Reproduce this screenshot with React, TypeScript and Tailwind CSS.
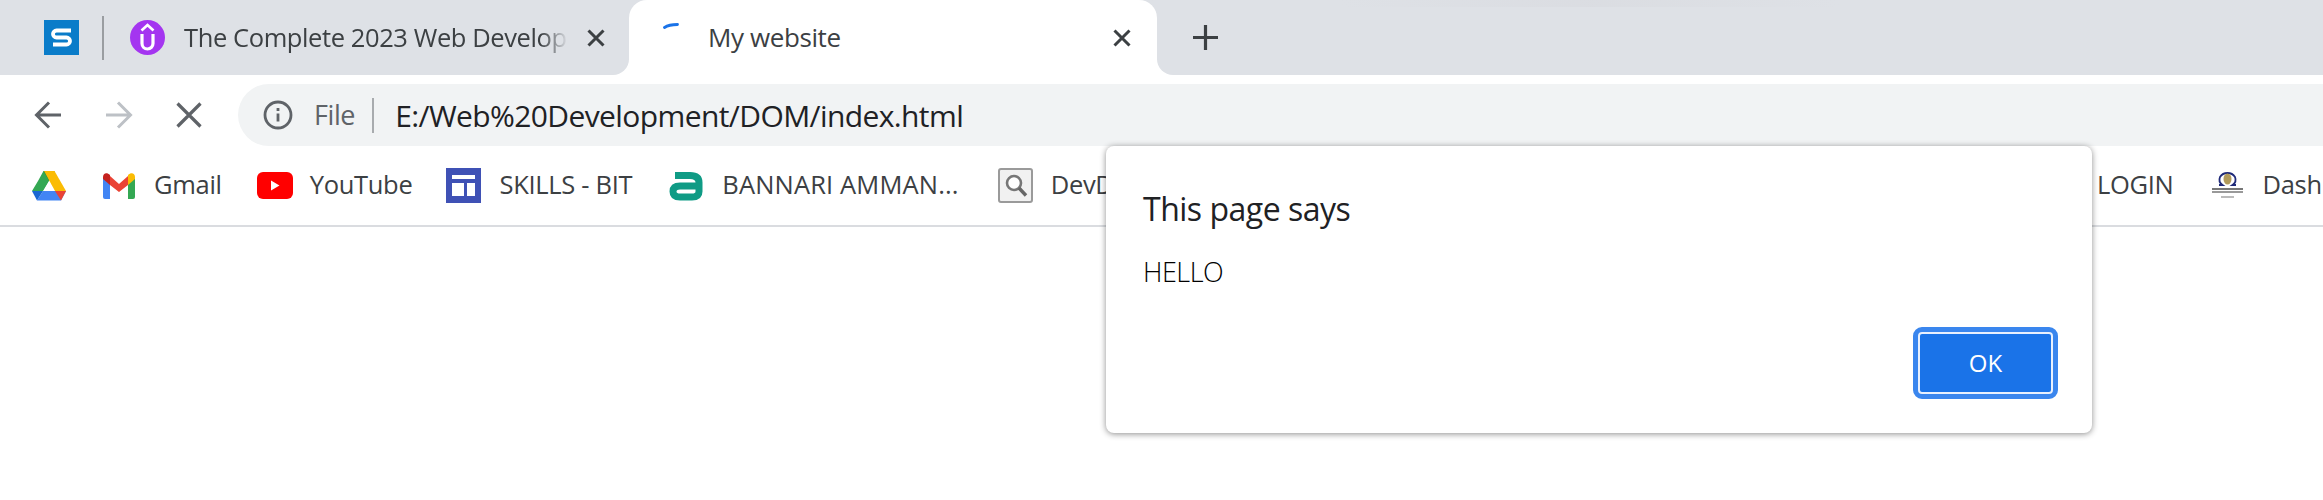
const font = "font-['Open_Sans',sans-serif]";

const CloseIcon = ({ className }: { className: string }) => (
  <svg viewBox="0 0 18 18" className={className} fill="none" stroke="currentColor" strokeWidth="3">
    <path d="M1.500 1.500 16.500 16.500M16.500 1.500 1.500 16.500" />
  </svg>
);

const SiteS = () => (
  <svg viewBox="0 0 35 35" className="h-[35px] w-[35px] shrink-0">
    <rect width="35" height="35" fill="#0a7cc9" />
    <path d="M27 10.500H12.500a3.500 3.500 0 0 0 0 7h10a3.500 3.500 0 0 1 0 7H9" fill="none" stroke="#fff" strokeWidth="3.800" />
  </svg>
);

const Udemy = () => (
  <svg viewBox="0 0 35 35" className="h-[35px] w-[35px] shrink-0">
    <circle cx="17.500" cy="17.500" r="17.500" fill="#a435f0" />
    <path d="M11.500 10.500 17.500 5l6 5.500" fill="none" stroke="#fff" strokeWidth="2.600" />
    <path d="M12 14v9.500a5.500 5.500 0 0 0 11 0V14" fill="none" stroke="#fff" strokeWidth="3.200" />
  </svg>
);

const Drive = () => (
  <svg viewBox="0 0 34 30" className="h-[30px] w-[34px] shrink-0">
    <path d="M11.500 0h11L17 10 11 20H0l6-10z" fill="#34a853" />
    <path d="M11.500 0h11L17 9.500z" fill="#188038" />
    <path d="M22.500 0 34 20H23L12 0z" fill="#fbbc04" />
    <path d="M11 20h23l-5 9.500H5z" fill="#4285f4" />
    <path d="M23 20h11l-5 9.500z" fill="#ea4335" />
    <path d="M0 20h11l-6 9.500z" fill="#1967d2" />
    <path d="M17 10.500 22.500 20h-11z" fill="#fff" />
  </svg>
);

const Gmail = () => (
  <svg viewBox="0 0 32 26" className="h-[26px] w-[32px] shrink-0">
    <path d="M0 4v20a2 2 0 0 0 2 2h5V10z" fill="#4285f4" />
    <path d="M32 4v20a2 2 0 0 1-2 2h-5V10z" fill="#34a853" />
    <path d="M7 3 16 11l9-8v9l-9 7-9-7z" fill="#ea4335" />
    <path d="M0 4c0-4 4-5 7-2v10L0 6z" fill="#c5221f" />
    <path d="M32 4c0-4-4-5-7-2v10l7-6z" fill="#fbbc04" />
  </svg>
);

const YouTube = () => (
  <svg viewBox="0 0 36 27" className="h-[27px] w-[36px] shrink-0">
    <rect width="36" height="27" rx="6" fill="#f00" />
    <path d="M14 8.500v10l8.500-5z" fill="#fff" />
  </svg>
);

const Skills = () => (
  <svg viewBox="0 0 35 35" className="h-[35px] w-[35px] shrink-0">
    <rect width="35" height="35" fill="#3f51b5" />
    <rect x="6" y="7" width="23" height="4" fill="#fff" />
    <rect x="6" y="15" width="12" height="13" fill="#fff" />
    <rect x="21" y="15" width="8" height="13" fill="#fff" />
  </svg>
);

const Bannari = () => (
  <svg viewBox="0 0 34 30" className="h-[30px] w-[34px] shrink-0">
    <path
      d="M6 4.500h15q9 0 9 7v9q0 5.500-7 5.500H11q-7 0-7-5.500T11 15h17"
      fill="none"
      stroke="#0f9b85"
      strokeWidth="7"
    />
  </svg>
);

const DevIcon = () => (
  <svg viewBox="0 0 35 35" className="h-[35px] w-[35px] shrink-0">
    <rect x="1" y="1" width="33" height="33" rx="2" fill="#f1f1f1" stroke="#9a9a9a" strokeWidth="2" />
    <circle cx="16" cy="15" r="7" fill="#fff" stroke="#777" strokeWidth="2.600" />
    <path d="m21 20 7 7.500" stroke="#666" strokeWidth="3.400" />
  </svg>
);

const CollegeLogo = () => (
  <svg viewBox="0 0 33 30" className="h-[30px] w-[33px] shrink-0">
    <path d="M8 14h3.500Q7 11 9 6q2.500-4 7.500-4T24 6q2 5-2.500 8H25" fill="none" stroke="#1f2a78" strokeWidth="1.800" />
    <ellipse cx="16.500" cy="8" rx="4" ry="5.500" fill="#b19a5a" />
    <rect x="1" y="17" width="31" height="2" fill="#777" />
    <rect x="1" y="20" width="31" height="2" fill="#999" />
    <rect x="10" y="25" width="13" height="2" fill="#bbb" />
  </svg>
);

const bookmarks = [
  { icon: <Gmail />, label: "Gmail", gap: "ml-[37px] gap-[19px]" },
  { icon: <YouTube />, label: "YouTube", gap: "ml-[35px] gap-[17px]" },
  { icon: <Skills />, label: "SKILLS - BIT", gap: "ml-[34px] gap-[18px]" },
  { icon: <Bannari />, label: "BANNARI AMMAN...", gap: "ml-[37px] gap-[19px] tracking-[0.15px]" },
  { icon: <DevIcon />, label: "DevDocs", gap: "ml-[39px] gap-[18px]" },
];

export default function App() {
  return (
    <div className={`${font} relative h-[500px] w-full overflow-hidden bg-white`}>
      {/* Tab strip */}
      <div className="flex h-[75px] bg-linear-to-b from-[#dee1e6] from-50% to-white to-50%">
        <div className="flex w-[629px] shrink-0 items-center rounded-br-[16px] bg-[#dee1e6] pl-[44px]">
          <SiteS />
          <div className="ml-[23px] h-[44px] w-[2px] bg-[#9a9da1]" />
          <div className="ml-[26px]">
            <Udemy />
          </div>
          <div className="ml-[19px] w-[384px] overflow-hidden text-[25.5px] tracking-[-0.4px] whitespace-nowrap text-[#3c4043] [mask-image:linear-gradient(to_right,#000_93%,transparent)]">
            The Complete 2023 Web Development
          </div>
          <CloseIcon className="ml-[19px] h-[18px] w-[18px] text-[#3c4043]" />
        </div>
        <div className="flex w-[528px] shrink-0 items-center rounded-t-[18px] bg-white pl-[34px]">
          <svg viewBox="0 0 16 6" className="mb-[24px] h-[6px] w-[16px] shrink-0">
            <path d="M1.500 4.500Q6 1.500 14.500 1.500" fill="none" stroke="#1a73e8" strokeWidth="2.800" strokeLinecap="round" />
          </svg>
          <span className="ml-[29px] w-[405px] text-[26px] tracking-[-0.4px] text-[#3c4043]">My website</span>
          <CloseIcon className="h-[18px] w-[18px] text-[#3c4043]" />
        </div>
        <div className="flex flex-1 items-center rounded-bl-[16px] bg-[#dee1e6] pl-[36px]">
          <svg viewBox="0 0 25 25" className="h-[25px] w-[25px]" fill="none" stroke="#3c4043" strokeWidth="3.200">
            <path d="M12.500 0v25M0 12.500h25" />
          </svg>
        </div>
      </div>
      <div className="absolute top-0 left-[1340px] h-[7px] w-[500px] bg-linear-to-r from-transparent via-[#d9dbe0] to-transparent opacity-70" />

      {/* Toolbar */}
      <div className="flex h-[71px] items-start pt-[9px]">
        <div className="flex h-[62px] w-[238px] shrink-0 items-center pl-[34px]">
          <svg viewBox="0 0 28 28" className="h-[28px] w-[28px]" fill="none" stroke="#5f6368" strokeWidth="3">
            <path d="M27 14H3M15 1.500 2.500 14 15 26.500" />
          </svg>
          <svg viewBox="0 0 28 28" className="ml-[43px] h-[28px] w-[28px]" fill="none" stroke="#bdc1c6" strokeWidth="3">
            <path d="M1 14h24M13 1.500 25.500 14 13 26.500" />
          </svg>
          <svg viewBox="0 0 26 26" className="ml-[43px] h-[26px] w-[26px]" fill="none" stroke="#5f6368" strokeWidth="3.200">
            <path d="M1.500 1.500l23 23M24.500 1.500l-23 23" />
          </svg>
        </div>
        <div className="flex h-[62px] flex-1 items-center rounded-l-[31px] bg-[#f1f3f4] pl-[25px]">
          <svg viewBox="0 0 30 30" className="h-[30px] w-[30px] shrink-0" fill="none" stroke="#5f6368" strokeWidth="2.800">
            <circle cx="15" cy="15" r="13" />
            <path d="M15 13.500v8M15 8v3" />
          </svg>
          <span className="ml-[21px] text-[27px] tracking-[-0.4px] text-[#5f6368]">File</span>
          <div className="ml-[17px] h-[35px] w-[2px] bg-[#a8abae]" />
          <span className="ml-[21px] text-[30px] tracking-[-0.6px] text-[#202124]">E:/Web%20Development/DOM/index.html</span>
        </div>
      </div>

      {/* Bookmarks bar */}
      <div className="flex h-[81px] items-center overflow-hidden border-b-2 border-[#dadce0] pl-[32px] text-[25.5px] tracking-[-0.3px] whitespace-nowrap text-[#3c4043]">
        <div className="flex w-[2065px] shrink-0 items-center">
          <Drive />
          {bookmarks.map((b) => (
            <div key={b.label} className={`flex shrink-0 items-center ${b.gap}`}>
              {b.icon}
              <span className="pb-[3px]">{b.label}</span>
            </div>
          ))}
        </div>
        <span className="shrink-0 pb-[3px]">LOGIN</span>
        <div className="ml-[37px] flex shrink-0 items-center gap-[19px]">
          <CollegeLogo />
          <span className="pb-[3px]">Dashboard</span>
        </div>
      </div>

      {/* Alert dialog */}
      <div className="absolute top-[146px] left-[1106px] flex h-[287px] w-[986px] flex-col rounded-[8px] bg-white px-[37px] pt-[41px] shadow-[0_1px_6px_rgba(0,0,0,0.45)]">
        <div className="text-[32px] leading-[44px] tracking-[-0.5px] text-[#202124]">This page says</div>
        <div className="mt-[25px] text-[27px] leading-[32px] font-light tracking-[-0.5px] text-black">HELLO</div>
        <div className="mt-auto mb-[34px] flex justify-end">
          <button className="-mr-[3px] h-[72px] w-[145px] rounded-[9px] border-[5px] border-[#3a86ee] bg-[#1a73e8] text-[24px] text-white outline-2 -outline-offset-7 outline-[#e8f0fe]">
            OK
          </button>
        </div>
      </div>
    </div>
  );
}
